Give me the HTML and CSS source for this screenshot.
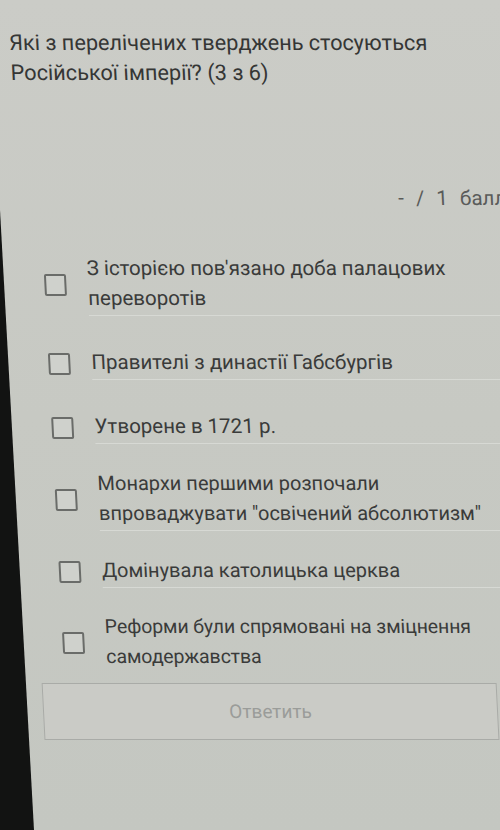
FILE: index.html
```html
<!DOCTYPE html>
<html lang="uk">
<head>
<meta charset="utf-8">
<title>Питання</title>
<link rel="stylesheet" href="styles.css">
</head>
<body>
<div class="page">
  <div class="content">
    <h1 class="question">Які з перелічених тверджень стосуються Російської імперії? (3 з 6)</h1>
    <div class="score">- / 1 балл</div>
    <ul class="options">
      <li class="option"><span class="box"></span><span class="label">З історією пов'язано доба палацових переворотів</span></li>
      <li class="option"><span class="box"></span><span class="label">Правителі з династії Габсбургів</span></li>
      <li class="option tight"><span class="box"></span><span class="label">Утворене в 1721 р.</span></li>
      <li class="option tight far"><span class="box"></span><span class="label">Монархи першими розпочали впроваджувати "освічений абсолютизм"</span></li>
      <li class="option tight far"><span class="box"></span><span class="label">Домінувала католицька церква</span></li>
      <li class="option last farther"><span class="box"></span><span class="label">Реформи були спрямовані на зміцнення самодержавства</span></li>
    </ul>
    <button class="submit" type="button">Ответить</button>
  </div>
</div>
</body>
</html>
```

FILE: styles.css
```css
html, body {
  margin: 0;
  padding: 0;
  width: 500px;
  height: 830px;
  overflow: hidden;
  background: #121312;
}

.page {
  width: 500px;
  height: 830px;
  overflow: hidden;
  background: linear-gradient(180deg, #cbccc7 0%, #c7c9c3 50%, #c4c7c1 100%);
  clip-path: polygon(0 0, 100% 0, 100% 100%, 34px 100%, 0 210px);
  font-family: Roboto, "Noto Sans", "Liberation Sans", sans-serif;
  color: #3a3b3a;
}

.content {
  transform-origin: 0 0;
  transform: skewX(2.9deg);
  padding: 28px 0 0 7px;
  width: 560px;
}

.question {
  margin: 0;
  font-size: 21.7px;
  font-weight: 400;
  line-height: 30px;
  width: 460px;
  color: #353635;
}

.score {
  margin-top: 97px;
  padding-left: 381px;
  font-size: 20.5px;
  line-height: 26px;
  color: #5a5b5a;
  white-space: nowrap;
  word-spacing: 7px;
}

.options {
  list-style: none;
  margin: 42px 0 0 0;
  padding: 0;
}

.option {
  display: flex;
  align-items: center;
  gap: 21px;
  margin-left: 23px;
  margin-bottom: 31px;
}

.option.tight {
  margin-bottom: 24px;
}

.option.last {
  margin-bottom: 9px;
}

.box {
  flex: none;
  width: 18px;
  height: 18px;
  border: 2px solid #6a6c69;
  border-radius: 2px;
  background: #cfd1cc;
}

.label {
  flex: 1;
  max-width: 402px;
  font-size: 20.5px;
  line-height: 30px;
  padding-bottom: 2px;
  padding-right: 100px;
  border-bottom: 1px solid #d7d9d4;
}

.option.far .label {
  font-size: 20px;
}

.option.farther .label {
  font-size: 19.5px;
  letter-spacing: -0.1px;
}

.option.last .label {
  border-bottom: none;
}

.submit {
  display: block;
  width: 455px;
  height: 57px;
  margin: 0;
  padding: 0;
  border: 1px solid #a9aba7;
  background: #cacbc6;
  font-family: Roboto, "Noto Sans", "Liberation Sans", sans-serif;
  font-size: 19px;
  color: #9a9c99;
  text-align: center;
}
```
